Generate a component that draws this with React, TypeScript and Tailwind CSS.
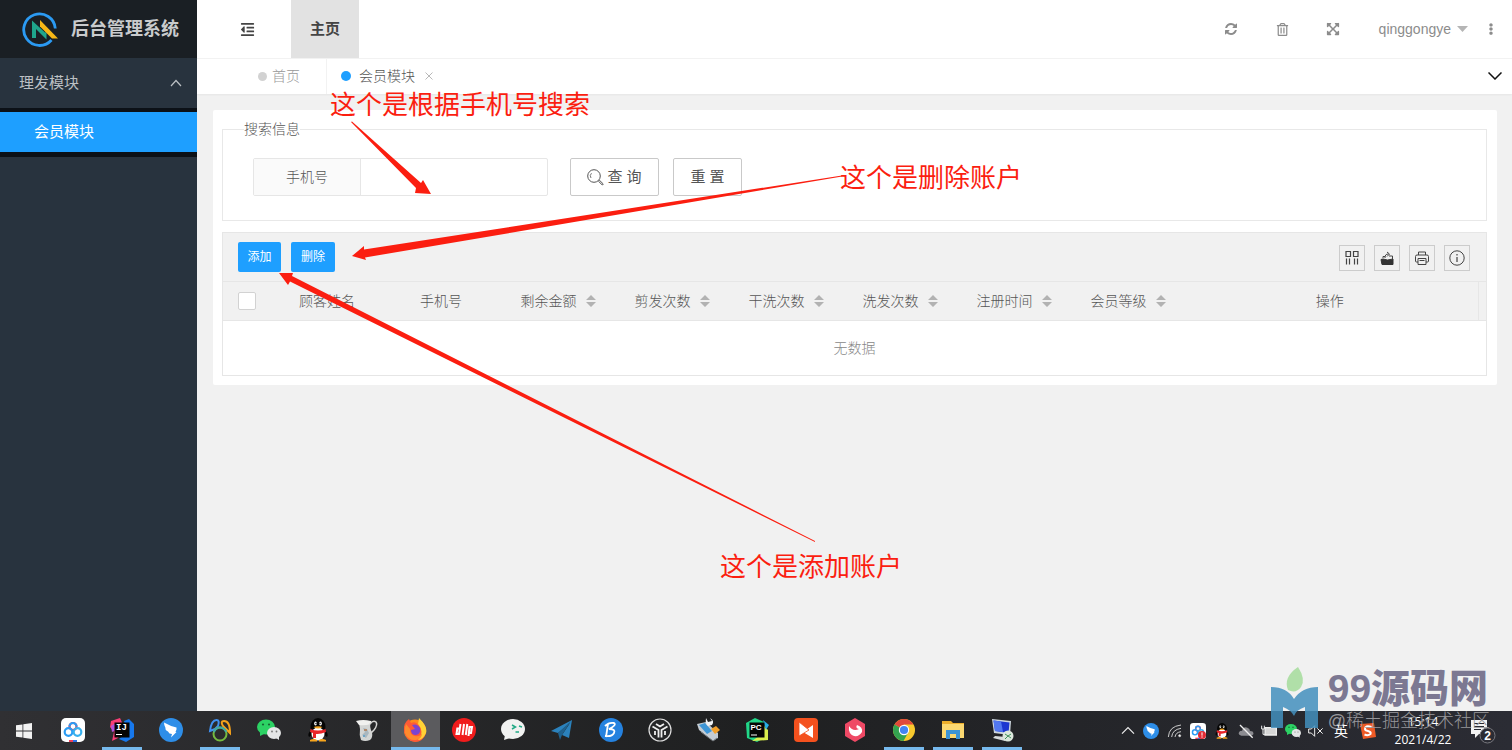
import type { ReactNode } from "react";
import { FaEllipsisV, FaExpandArrowsAlt, FaOutdent, FaRegTrashAlt } from "react-icons/fa";

function Sidebar() {
  return (
    <aside className="w-[197px] shrink-0 bg-[#28333e] text-[15px]">
      <div className="flex h-[58px] items-center gap-3 bg-[#1a1f24] pl-[21px]">
        <svg viewBox="0 0 38 36" className="h-9 w-[38px] shrink-0">
          <path d="M30.500 29A15.800 15.800 0 1 1 34.300 17.500" fill="none" stroke="#2b9af3" strokeWidth="2.800" />
          <path d="M11 27V9.500L24.500 22V17L25.500 18V28.500L15 18V27Z" fill="#1fa58c" />
          <path d="M19 9L37 27.500H31L19 15.500Z" fill="#f7b716" />
        </svg>
        <h1 className="text-lg font-bold whitespace-nowrap text-[#c9cbcd]">后台管理系统</h1>
      </div>
      <nav>
        <button className="flex h-[50px] w-full items-center justify-between pr-[15px] pl-[19px] text-[#bcc0c4]">
          理发模块
          <svg viewBox="0 0 12 8" className="h-2 w-3">
            <path d="M1 7L6 1.500L11 7" fill="none" stroke="#bcc0c4" strokeWidth="1.200" />
          </svg>
        </button>
        <div className="bg-[#0c1117] pt-1 pb-[5px]">
          <a href="#member" className="flex h-10 items-center bg-[#1e9fff] pl-[34px] text-white">
            会员模块
          </a>
        </div>
      </nav>
    </aside>
  );
}

function Header() {
  return (
    <header className="flex h-[58px] items-center justify-between bg-white text-[#8c8c8c]">
      <div className="flex h-full items-center">
        <button aria-label="收起菜单" className="flex w-[94px] justify-center pl-[7px] text-[#444]">
          <FaOutdent size={15} />
        </button>
        <a href="#home" className="flex h-full w-[68px] items-center justify-center bg-[#e2e2e2] text-[15px] font-bold text-[#444]">
          主页
        </a>
      </div>
      <div className="flex items-center pr-[15px]">
        <button aria-label="刷新" className="flex w-[51px] justify-center">
          <svg viewBox="0 128 1792 1664" className="h-[13px] w-[14px]" fill="currentColor">
            <path d="M1639 1056q0 5-1 7-64 268-268 434.500t-478 166.500q-146 0-282.500-55t-243.500-157l-129 129q-19 19-45 19t-45-19-19-45v-448q0-26 19-45t45-19h448q26 0 45 19t19 45-19 45l-137 137q71 66 161 102t187 36q134 0 250-65t186-179q11-17 53-117 8-23 30-23h192q13 0 22.500 9.500t9.500 22.500zm25-800v448q0 26-19 45t-45 19h-448q-26 0-45-19t-19-45 19-45l138-138q-148-137-349-137-134 0-250 65t-186 179q-11 17-53 117-8 23-30 23h-199q-13 0-22.500-9.500t-9.500-22.500v-7q65-268 270-434.500t480-166.500q146 0 284 55.500t245 156.500l130-129q19-19 45-19t45 19 19 45z" />
          </svg>
        </button>
        <button aria-label="清空" className="flex w-[51px] justify-center">
          <FaRegTrashAlt size={13} />
        </button>
        <button aria-label="全屏" className="flex w-[51px] justify-center">
          <FaExpandArrowsAlt size={14} />
        </button>
        <button className="ml-5 flex items-center gap-[6px] text-sm">
          qinggongye
          <svg viewBox="0 0 11 6" className="h-[6px] w-[11px]" fill="#b5b5b5">
            <path d="M0 0H11L5.500 6Z" />
          </svg>
        </button>
        <button aria-label="更多" className="ml-[17px]">
          <FaEllipsisV size={12} />
        </button>
      </div>
    </header>
  );
}

function TabBar() {
  return (
    <div className="flex h-9 items-center justify-between bg-white text-sm font-light inset-shadow-2xs shadow-xs">
      <div className="flex h-full items-center">
        <a href="#home" className="flex h-full w-[130px] items-center gap-[5px] border-r border-[#f2f2f2] pl-[61px] text-[#999]">
          <span className="size-[9px] rounded-full bg-[#d2d2d2]" />
          首页
        </a>
        <a href="#member" className="flex items-center pl-[14px] text-[#555]">
          <span className="mr-2 size-[10px] rounded-full bg-[#1e9fff]" />
          会员模块
          <svg viewBox="0 0 8 8" className="ml-[10px] size-2">
            <path d="M0.500 0.500L7.500 7.500M7.500 0.500L0.500 7.500" stroke="#b8b8b8" />
          </svg>
        </a>
      </div>
      <button aria-label="展开" className="pr-[10px]">
        <svg viewBox="0 0 14 8" className="h-2 w-[14px]">
          <path d="M0.500 0.500L7 7L13.500 0.500" fill="none" stroke="#111" strokeWidth="1.500" />
        </svg>
      </button>
    </div>
  );
}

function SearchBox() {
  return (
    <fieldset className="border border-[#e8e8e8] pb-6">
      <legend className="ml-[21px] text-sm font-light text-[#555]">搜索信息</legend>
      <form className="flex pt-[19px] pl-[30px]">
        <div className="flex h-[38px] w-[295px] rounded-xs border border-[#e6e6e6]">
          <label htmlFor="phone" className="flex w-[107px] shrink-0 items-center justify-center border-r border-[#e6e6e6] bg-[#fafafa] text-sm font-light text-[#555]">
            手机号
          </label>
          <input id="phone" type="text" className="w-full min-w-0 px-2 text-sm outline-none" />
        </div>
        <button type="button" className="ml-[22px] flex h-[38px] w-[89px] items-center justify-center gap-[3px] rounded-xs border border-[#c9c9c9] text-[15px] whitespace-nowrap text-[#555]">
          <svg viewBox="0 0 17 17" className="size-[17px]" fill="none" stroke="#555">
            <circle cx="7" cy="7" r="6.300" />
            <path d="M4 9A3.800 3.800 0 0 1 4.500 4.200" strokeWidth="0.800" />
            <path d="M11.500 12.300L15.300 16L16.300 15L12.500 11.300Z" />
          </svg>
          查 询
        </button>
        <button type="reset" className="ml-[14px] h-[38px] w-[69px] rounded-xs border border-[#c9c9c9] text-[15px] text-[#555]">
          重 置
        </button>
      </form>
    </fieldset>
  );
}

function ToolButton({ label, children }: { label: string; children: ReactNode }) {
  return (
    <button aria-label={label} className="flex size-[26px] items-center justify-center border border-[#ccc]">
      <svg viewBox="0 0 16 16" className="size-4" fill="none" stroke="#444">
        {children}
      </svg>
    </button>
  );
}

const columns = [
  { title: "顾客姓名", sort: false },
  { title: "手机号", sort: false },
  { title: "剩余金额", sort: true },
  { title: "剪发次数", sort: true },
  { title: "干洗次数", sort: true },
  { title: "洗发次数", sort: true },
  { title: "注册时间", sort: true },
  { title: "会员等级", sort: true },
];

function MemberTable() {
  return (
    <section className="mt-[11px] border border-[#e6e6e6]">
      <div className="flex h-12 items-center justify-between bg-[#f1f1f1] pr-4 pl-[15px]">
        <div className="flex gap-[10px] text-xs text-white">
          <button className="h-[30px] w-[43px] rounded-xs bg-[#1e9fff]">添加</button>
          <button className="h-[30px] w-[44px] rounded-xs bg-[#1e9fff]">删除</button>
        </div>
        <div className="flex gap-[9px] pt-[2px]">
          <ToolButton label="筛选列">
            <path d="M2 1.500H6.500V6.500H2ZM9.500 1.500H14V6.500H9.500ZM2.500 8.500V14.500M5.500 8.500V14.500M10.500 8.500V14.500M13.500 8.500V14.500" strokeWidth="1.200" />
          </ToolButton>
          <ToolButton label="导出">
            <path d="M2 9.500L4 9Q8 11 14 9V14.500H3Z" fill="#333" stroke="#333" />
            <path d="M4 8V6.500H6M10 6H13.500V9M6 8C6 5 7 4 9.500 4M8 2L10.500 4L8 6.500" />
          </ToolButton>
          <ToolButton label="打印">
            <path d="M4.500 5V2H11.500V5M4 12H2.500Q1.500 12 1.500 11V6.500Q1.500 5 3 5H13Q14.500 5 14.500 6.500V11Q14.500 12 13.500 12H12M4 8.500H12V14.500H4ZM5.500 10.500H10.500" />
          </ToolButton>
          <ToolButton label="提示">
            <circle cx="8" cy="8" r="7.200" />
            <path d="M8 7V12M8 4V5.500" strokeWidth="1.200" />
          </ToolButton>
        </div>
      </div>
      <table className="w-full table-fixed text-sm font-light">
        <thead>
          <tr className="h-[39px] border-y border-[#e6e6e6] bg-[#f1f1f1] text-[#555]">
            <th className="w-[47px] text-left">
              <input type="checkbox" aria-label="全选" className="ml-[15px] block size-[18px] appearance-none rounded-xs border border-[#d2d2d2] bg-white" />
            </th>
            {columns.map((col) => (
              <th key={col.title} className={col.sort ? "w-[114px] pl-[6px] font-light" : "w-[114px] font-light"}>
                <span className="flex items-center justify-center gap-[9px]">
                  {col.title}
                  {col.sort && (
                    <svg viewBox="0 0 10 12" className="h-3 w-[10px]" fill="#b2b2b2">
                      <path d="M0 5L5 0L10 5ZM0 7H10L5 12Z" />
                    </svg>
                  )}
                </span>
              </th>
            ))}
            <th className="font-light">操作</th>
            <th className="w-2 border-l border-[#e6e6e6]" />
          </tr>
        </thead>
        <tbody>
          <tr className="h-[54px]">
            <td colSpan={columns.length + 3} className="text-center text-[#888]">
              无数据
            </td>
          </tr>
        </tbody>
      </table>
    </section>
  );
}

const icons: Record<string, ReactNode> = {
  baidu: (
    <>
      <rect width="24" height="24" rx="5" fill="#fff" />
      <g fill="none" strokeWidth="2.200">
        <circle cx="12" cy="8.500" r="3.500" stroke="#f0415a" />
        <path d="M8.500 8.500A3.500 3.500 0 0 1 15.500 8.500" stroke="#2b9cf4" />
        <circle cx="7.500" cy="14" r="3.800" stroke="#2b9cf4" />
        <circle cx="16.500" cy="14" r="3.800" stroke="#38b0ee" />
      </g>
      <path d="M8 22H12V24H8Z" fill="#f0415a" />
      <path d="M12 22H16V24H12Z" fill="#2b72e8" />
    </>
  ),
  idea: (
    <>
      <path d="M1 3L10 0L14 9L8 20L2 23L4 14L0 9Z" fill="#f93d75" />
      <path d="M14 3L19 1L24 6V19L16 24L9 21L17 14Z" fill="#1778ed" />
      <path d="M1 8L6 5V12L2 14Z" fill="#b052dc" />
      <rect x="4.500" y="4.500" width="15" height="15" fill="#050505" />
      <text x="6" y="12" fill="#fff" className="font-mono text-[9px] font-bold">IJ</text>
      <path d="M6 16.500H12" stroke="#fff" />
    </>
  ),
  ding: (
    <>
      <circle cx="12" cy="12" r="12" fill="#2e8ee8" />
      <path d="M5 4.500Q11 8 17.500 9.500Q18 11 16.500 14H17.500L12 19.500L13 16Q10 16 9 13.500Q6 12 6.500 10Q5 7.500 5 4.500Z" fill="#fff" />
    </>
  ),
  navicat: (
    <g fill="none" strokeWidth="2">
      <path d="M7 11L2 13C3 5 5 2 8.500 2Q12 2 10 8Z" stroke="#4090f0" />
      <path d="M15 8L22 15C22 8 20 3 16 3Q12 3 15 8Z" stroke="#f6a21a" />
      <circle cx="12" cy="16" r="6.500" stroke="#76bb40" />
      <path d="M5.800 14Q8 9.500 12 9.500Q16 9.500 18.300 14" stroke="#40a8a4" />
    </g>
  ),
  wechat: (
    <>
      <ellipse cx="9" cy="9" rx="9" ry="7.500" fill="#2cd264" />
      <path d="M3 14L3 18L8 15.500Z" fill="#2cd264" />
      <ellipse cx="17" cy="15" rx="7" ry="6" fill="#e4e5e6" />
      <path d="M19 20L22 22L22 18Z" fill="#e4e5e6" />
      <g fill="#176634">
        <circle cx="6" cy="6.500" r="1.100" />
        <circle cx="12" cy="6.500" r="1.100" />
        <circle cx="15" cy="13.500" r="0.900" fill="#777" />
        <circle cx="19.500" cy="13.500" r="0.900" fill="#777" />
      </g>
    </>
  ),
  qq: (
    <>
      <path d="M5 12Q1 16 3 19L6 17M19 12Q23 16 21 19L18 17" fill="#050505" />
      <ellipse cx="12" cy="9" rx="7.500" ry="9" fill="#050505" />
      <ellipse cx="12" cy="16" rx="6.500" ry="6.500" fill="#fff" />
      <path d="M4.500 11Q12 14 19.500 11L20 14Q14 16.500 10 16V20H7V15L4 14Z" fill="#e8252a" />
      <ellipse cx="9.500" cy="5.500" rx="1.300" ry="1.900" fill="#fff" />
      <ellipse cx="14.500" cy="5.500" rx="1.300" ry="1.900" fill="#fff" />
      <circle cx="10" cy="5.500" r="0.700" />
      <circle cx="14" cy="5.500" r="0.700" />
      <path d="M7.500 9Q12 7.500 16.500 9Q12 12 7.500 9ZM4 22Q8 20 11 22V23.500H4ZM13 22Q16 20 20 22V23.500H13Z" fill="#f8a51c" />
    </>
  ),
  jug: (
    <>
      <path d="M4 5L16 4Q14 9 17 14Q18 20 15 22Q10 24 6 22Q4 17 5 11Z" fill="#d3d5d4" />
      <path d="M1 3Q8 1 16 3V6Q9 8 4 7Z" fill="#f1f1ef" />
      <path d="M15 6Q18 2 21 4Q23 7 19 12L16 15" fill="none" stroke="#d5d5d3" strokeWidth="1.500" />
      <path d="M8 10L10 14L7 17L11 20L14 15L12 11Z" fill="#a9b7bf" />
      <path d="M9 11H12V13H9Z" fill="#b18a6c" />
      <path d="M8 17H10V19H8Z" fill="#6fa5c6" />
    </>
  ),
  firefox: (
    <>
      <circle cx="12" cy="12.500" r="11" fill="#ff8a1b" />
      <path d="M1 13Q0 5 6 1L8 5Q13 3 15 7L16 1Q24 7 23 15Q20 24 12 24Q3 23 1 13Z" fill="#ff5a35" />
      <path d="M15 6L16 0Q25 9 23 15Q20 22 15 22Q22 14 15 6Z" fill="#ffd335" />
      <path d="M2 15Q5 23 13 22Q19 21 19 15Q17 19 12 18Q7 17 7 11L3 6Q1 10 2 15Z" fill="#ff8a2c" />
      <path d="M9 7Q14 5 17 10Q18 16 13 17Q8 17 8 12L12 11Z" fill="#7b45cf" />
    </>
  ),
  dip: (
    <>
      <circle cx="12" cy="12" r="12" fill="#f01c1c" />
      <path d="M8.500 6L7 16H4.500L5.300 10.500H8M12 6L10.500 17M15.300 6L13.800 17M16.500 18L17.500 9H20L19 15H16.800" fill="none" stroke="#fff" strokeWidth="2" />
    </>
  ),
  chat: (
    <>
      <ellipse cx="12" cy="11" rx="12" ry="10" fill="#f1f2f1" />
      <path d="M4 17L3 22L9 20Z" fill="#f1f2f1" />
      <path d="M11 7L14.500 9L11 11M14.500 14H18M18 8L21 9" fill="none" stroke="#21a985" strokeWidth="1.500" />
    </>
  ),
  plane: (
    <>
      <path d="M1 13L22 2L19 20L12 17L20 5L8 15Z" fill="#2b82bd" />
      <path d="M8 15L21 3L12 17L10 22Z" fill="#1f628f" />
    </>
  ),
  blog: (
    <>
      <circle cx="12" cy="12" r="12" fill="#2582df" />
      <path d="M9 6L7 19M6 8Q10 4 15 5Q18 7 10 11Q17 11 15 15Q13 19 6 18" fill="none" stroke="#fff" strokeWidth="1.800" />
    </>
  ),
  tripod: (
    <>
      <circle cx="12" cy="12" r="11" fill="#252627" stroke="#dedede" strokeWidth="1.200" />
      <path d="M4.500 8.500L10.500 12V19.500M19.500 8.500L13.500 12V19.500M8 6L12 8.500L16 6M7 13V17M17 13V17" fill="none" stroke="#eee" strokeWidth="1.800" />
    </>
  ),
  tools: (
    <>
      <path d="M1 6L10 4L22 15V20L17 23L3 12Z" fill="#c4ccd3" />
      <path d="M3 7L9 5L16 13L11 16Z" fill="#3d96d7" />
      <path d="M15 11L20 8L24 12L19 16Z" fill="#f2a02a" />
      <path d="M10 0L12 4L16 3L14 0Q19 3 16 7L12 8Q9 6 10 0Z" fill="#f0f3f6" />
      <path d="M5 14L17 23L21 20" fill="none" stroke="#72777b" />
    </>
  ),
  pycharm: (
    <>
      <path d="M1 5L10 0L19 4L21 19L12 24L2 20Z" fill="#21d789" />
      <path d="M19 8L23 12V22L7 23L17 16Z" fill="#d9ee4d" />
      <path d="M18 2L24 7L21 12Z" fill="#27aee6" />
      <rect x="4.500" y="4.500" width="15" height="15" fill="#050505" />
      <text x="5.500" y="12" fill="#fff" className="text-[8px] font-bold">PC</text>
      <path d="M6 17H12" stroke="#fff" />
    </>
  ),
  bowtie: (
    <>
      <rect width="24" height="24" rx="4" fill="#f4511e" />
      <path d="M19 7V20L9 14Z" fill="#fff" />
      <path d="M5 4L15 12L5 18Z" fill="#fff" stroke="#f4511e" strokeWidth="0.800" />
    </>
  ),
  hexagon: (
    <>
      <path d="M12 0L22 6V18L12 24L2 18V6Z" fill="#ef4965" />
      <path d="M6 8Q10 14 16 11Q12 10 14 7Q20 9 19 14Q16 19 11 18Q5 16 6 8Z" fill="#fff" />
    </>
  ),
  chrome: (
    <>
      <circle cx="12" cy="12" r="11" fill="#f7c92e" />
      <path d="M12 12L2.500 6.500A11 11 0 0 1 21.500 6.500H12Z" fill="#e1493b" />
      <path d="M12 12L2.500 6.500A11 11 0 0 0 11.500 23L16.500 14Z" fill="#34a350" />
      <circle cx="12" cy="12" r="5.200" fill="#fff" />
      <circle cx="12" cy="12" r="4.100" fill="#4384f3" />
    </>
  ),
  folder: (
    <>
      <path d="M1 3H10L12 5H23V20H1Z" fill="#ecae2c" />
      <path d="M1 6H23V20H1Z" fill="#fbd871" />
      <path d="M5 12H19V21H15V16H9V21H5Z" fill="#3c94d5" />
    </>
  ),
  remote: (
    <>
      <path d="M2 1L21 3L20 17L4 15Z" fill="#cdd6de" />
      <path d="M3.500 2.500L19.500 4.500L18.500 15L5 13Z" fill="#1d37d0" />
      <path d="M3.500 2.500L11 3.500L13 14L5 13Z" fill="#5278f0" />
      <path d="M5 18L16 19L15 23L3 20Z" fill="#d8dcdd" />
      <circle cx="18" cy="18" r="5.500" fill="#dce7dc" />
      <path d="M15 16L18 18L15 21M21 16L18 18L21 20" fill="none" stroke="#40915c" />
    </>
  ),
};

const apps = [
  { name: "baidu" },
  { name: "idea", open: true },
  { name: "ding" },
  { name: "navicat", open: true },
  { name: "wechat" },
  { name: "qq" },
  { name: "jug" },
  { name: "firefox", active: true },
  { name: "dip" },
  { name: "chat" },
  { name: "plane" },
  { name: "blog" },
  { name: "tripod" },
  { name: "tools" },
  { name: "pycharm" },
  { name: "bowtie" },
  { name: "hexagon" },
  { name: "chrome", open: true },
  { name: "folder", open: true },
  { name: "remote", open: true },
];

const tray: ReactNode[] = [
  <path d="M3 16L12 7L21 16" fill="none" stroke="#eee" strokeWidth="1.800" />,
  icons.ding,
  <g fill="none" stroke="#ccc" strokeWidth="1.500">
    <path d="M2 21Q3 5 21 3M7 21Q8 10 21 8M12 21Q13 14 21 13" />
    <circle cx="19" cy="19" r="1.500" fill="#fff" />
  </g>,
  <>
    {icons.baidu}
    <circle cx="18" cy="18" r="6" fill="#e32b34" />
    <path d="M18 14V19M18 20V22" stroke="#fff" strokeWidth="1.500" />
  </>,
  icons.qq,
  <>
    <path d="M5 19Q-1 18 2 13Q4 11 6 12Q8 5 14 7Q18 8 18 12Q24 12 23 17Q22 19 19 19Z" fill="#8c8c91" />
    <path d="M3 3L22 22" stroke="#eee" strokeWidth="2" />
  </>,
  <>
    <path d="M6 7H23V18H6Z" fill="#d6d6d6" stroke="#eee" strokeWidth="2" />
    <path d="M1 4V9H5V4M3 9V17H7" fill="none" stroke="#eee" strokeWidth="1.500" />
  </>,
  icons.wechat,
  <path d="M1 9H5L10 4V20L5 15H1ZM14 8L22 16M22 8L14 16" fill="none" stroke="#eee" strokeWidth="1.500" />,
];

function Taskbar() {
  return (
    <footer className="flex h-[39px] items-center justify-between bg-linear-to-r from-[#303033] via-[#1f2021] to-[#2b2c34] text-white">
      <div className="flex h-full items-center">
        <button aria-label="开始" className="flex w-[49px] pl-4">
          <svg viewBox="0 0 16 16" className="size-4" fill="#f2f2f2">
            <path d="M0 2.300L6.500 1.400V7.500H0ZM7.300 1.300L16 0V7.500H7.300ZM0 8.400H6.500V14.600L0 13.700ZM7.300 8.400H16V16L7.300 14.700Z" />
          </svg>
        </button>
        <div className="grid h-full w-[977px] grid-cols-20">
          {apps.map((app) => (
            <button key={app.name} aria-label={app.name} className={app.active ? "flex flex-col items-center bg-[#5b5b5e]" : "flex flex-col items-center"}>
              <svg viewBox="0 0 24 24" className="mt-[7px] size-6">
                {icons[app.name]}
              </svg>
              {app.active && <span className="mt-[5px] h-[3px] w-full bg-[#76b9ed]" />}
              {app.open && <span className="mt-[5px] h-[3px] w-10 bg-[#76b9ed]" />}
            </button>
          ))}
        </div>
      </div>
      <div className="flex h-full items-center">
        <div className="grid w-[212px] grid-cols-9">
          {tray.map((icon, i) => (
            <svg key={i} viewBox="0 0 24 24" className="size-4 justify-self-center">
              {icon}
            </svg>
          ))}
        </div>
        <span className="ml-[6px] text-sm">英</span>
        <svg viewBox="0 0 16 16" className="ml-3 size-4">
          <path d="M0 1L14 0L16 14L3 16Z" fill="#ee5a26" />
          <path d="M11.500 4Q5 2 5 6Q5 7.500 8 8Q11.500 9 10.500 11Q8 13 4.500 11.500" fill="none" stroke="#fff" strokeWidth="2" />
        </svg>
        <div className="ml-4 w-[62px] text-center font-['Open_Sans'] text-xs leading-[18px]">
          <div>15:14</div>
          <div>2021/4/22</div>
        </div>
        <button aria-label="通知" className="mx-4 flex">
          <svg viewBox="0 0 26 26" className="size-[26px]">
            <path d="M1 2H17V16H9L5 20V16H1Z" fill="#f4f4f4" />
            <path d="M4 5.500H14M4 8.500H14M4 11.500H11" stroke="#2b2c34" />
            <circle cx="17.500" cy="17.500" r="7.500" fill="#2b2c34" stroke="#77777d" />
            <text x="17.500" y="22" textAnchor="middle" fill="#fff" className="text-xs font-bold">2</text>
          </svg>
        </button>
      </div>
    </footer>
  );
}

function Annotations() {
  return (
    <div className="pointer-events-none absolute inset-0 text-[26px] leading-[30px] whitespace-nowrap text-[#fb1e10]">
      <svg className="absolute inset-0 h-full w-full" fill="#fb1e10">
        <path d="M351 122L352 121.500L421 183L423 180L431 194L415 193L416 188Z" />
        <path d="M842 175.500L364 249.500L364 246L352 256L366 260L365 257.500L842 176.500Z" />
        <path d="M815 542L290 281.500L288 285L279 273L293 273L292 276L815 541Z" />
      </svg>
      <p className="absolute top-[90px] left-[330px]">这个是根据手机号搜索</p>
      <p className="absolute top-[163px] left-[840px]">这个是删除账户</p>
      <p className="absolute top-[552px] left-[720px]">这个是添加账户</p>
    </div>
  );
}

function Watermark() {
  return (
    <div className="pointer-events-none absolute right-[22px] bottom-[21px] flex gap-[10px] whitespace-nowrap">
      <svg viewBox="0 0 47 64" className="h-16 w-[47px]">
        <path d="M0 22Q16 22 23 34Q31 22 47 22V63H34V42Q25 45 23 51Q20 45 12 42V63H0Z" fill="#438fbd" fillOpacity="0.850" />
        <path d="M27 2Q35 14 30 22Q25 29 17 25Q12 12 27 2Z" fill="#a9dda0" fillOpacity="0.900" />
      </svg>
      <div>
        <p className="text-[39px] leading-[48px] font-black text-[#7c7892]">99源码网</p>
        <p className="text-[18px] leading-[16px] font-light text-[#97979b]">@稀土掘金技术社区</p>
      </div>
    </div>
  );
}

export default function App() {
  return (
    <div className="relative flex min-h-screen flex-col overflow-hidden bg-[#f1f1f1] font-['Liberation_Sans','Noto_Sans_CJK_SC',sans-serif]">
      <div className="flex flex-1">
        <Sidebar />
        <div className="min-w-0 flex-1">
          <Header />
          <TabBar />
          <main className="mt-4 mr-[15px] ml-4 rounded-xs bg-white py-[9px] pr-[10px] pl-[9px]">
            <SearchBox />
            <MemberTable />
          </main>
        </div>
      </div>
      <Taskbar />
      <Annotations />
      <Watermark />
    </div>
  );
}
